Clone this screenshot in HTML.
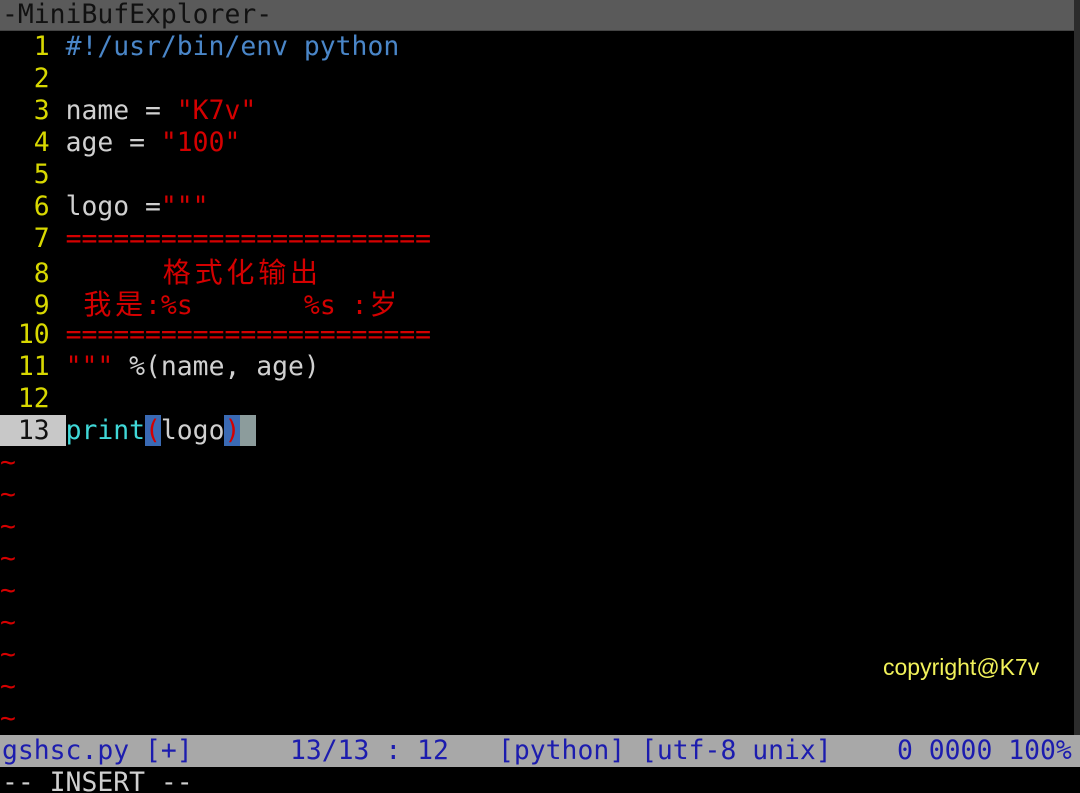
<!DOCTYPE html>
<html><head><meta charset="utf-8"><style>
html,body{margin:0;padding:0;background:#000;width:1080px;height:793px;overflow:hidden;position:relative}
.m{font-family:"DejaVu Sans Mono","Liberation Mono",monospace;font-size:26.4px;line-height:32px;white-space:pre}
.top{position:absolute;left:0;top:0;width:1074px;height:30px;background:#5a5a5a;border-bottom:1px solid #444}
.top span{position:absolute;left:2px;top:-1px;color:#111}
.rs{position:absolute;right:0;top:0;width:6px;height:735px;background:#2c2c2c}
.row{position:absolute;left:2px;height:32px}
.n{color:#d8d800}
.w{color:#d0d0d0}
.b{color:#4a86c8}
.r{color:#d40000}
.c{color:#40d8d8}
.cj{display:inline-block;width:31.8px;text-align:center;font-family:"Noto Sans CJK SC",sans-serif;font-size:28px}
.st{position:absolute;left:0;top:735px;width:1080px;height:32px;background:#a8a8a8;color:#1c1cae}
.st span{position:absolute;top:0}
.ins{position:absolute;left:2px;top:767px;color:#d0d0d0}
.cp{position:absolute;left:883px;top:654px;font-family:"Liberation Sans",sans-serif;font-size:23px;color:#f2f25a}
</style></head><body>
<div class="top m"><span>-MiniBufExplorer-</span></div>
<div class="rs"></div>
<div class="m">
<div class="row" style="top:31px"><span class="n">  1 </span><span class="b">#!/usr/bin/env python</span></div>
<div class="row" style="top:63px"><span class="n">  2 </span></div>
<div class="row" style="top:95px"><span class="n">  3 </span><span class="w">name = </span><span class="r">"K7v"</span></div>
<div class="row" style="top:127px"><span class="n">  4 </span><span class="w">age = </span><span class="r">"100"</span></div>
<div class="row" style="top:159px"><span class="n">  5 </span></div>
<div class="row" style="top:191px"><span class="n">  6 </span><span class="w">logo =</span><span class="r">"""</span></div>
<div class="row" style="top:223px"><span class="n">  7 </span><span class="r">=======================</span></div>
<div class="row" style="top:255px"><span class="n">  8 </span><span class="r">      <span class="cj">格</span><span class="cj">式</span><span class="cj">化</span><span class="cj">输</span><span class="cj">出</span></span></div>
<div class="row" style="top:287px"><span class="n">  9 </span><span class="r"> <span class="cj">我</span><span class="cj">是</span>:%s       %s :<span class="cj">岁</span></span></div>
<div class="row" style="top:319px"><span class="n"> 10 </span><span class="r">=======================</span></div>
<div class="row" style="top:351px"><span class="n"> 11 </span><span class="r">"""</span><span class="w"> %(name, age)</span></div>
<div class="row" style="top:383px"><span class="n"> 12 </span></div>
<div class="row" style="top:415px;left:0"><span style="background:#c8c8c8;color:#111;padding-left:2px"> 13 </span><span class="c">print</span><span class="r" style="background:#3a6ab4">(</span><span class="w">logo</span><span class="r" style="background:#3a6ab4">)</span><span style="background:#8c9c9c"> </span></div>
<div class="row r" style="top:447px;left:0">~</div>
<div class="row r" style="top:479px;left:0">~</div>
<div class="row r" style="top:511px;left:0">~</div>
<div class="row r" style="top:543px;left:0">~</div>
<div class="row r" style="top:575px;left:0">~</div>
<div class="row r" style="top:607px;left:0">~</div>
<div class="row r" style="top:639px;left:0">~</div>
<div class="row r" style="top:671px;left:0">~</div>
<div class="row r" style="top:703px;left:0">~</div>
</div>
<div class="st m"><span style="left:2px">gshsc.py [+]</span><span style="left:290px">13/13 : 12</span><span style="left:498px">[python] [utf-8 unix]</span><span style="left:897px">0 0000 100%</span></div>
<div class="ins m">-- INSERT --</div>
<div class="cp">copyright@K7v</div>
</body></html>
